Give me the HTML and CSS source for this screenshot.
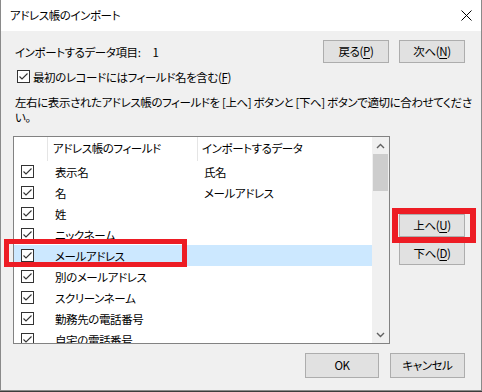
FILE: index.html
```html
<!DOCTYPE html>
<html lang="ja">
<head>
    <meta charset="UTF-8">
    <title>アドレス帳のインポート</title>
    <link rel="stylesheet" href="styles.css">
</head>
<body>
    <div class="window">
        <div class="titlebar">
            <span class="title">アドレス帳のインポート</span>
            <svg class="close" width="11" height="11" viewBox="0 0 11 11">
                <path d="M0.5 0.5 L10.5 10.5 M10.5 0.5 L0.5 10.5" stroke="#000" stroke-width="1" fill="none"/>
            </svg>
        </div>

        <div class="content">
            <div class="top-row">
                <span class="count">インポートするデータ項目:<span class="count-value">1</span></span>
                <div class="nav-buttons">
                    <button class="btn">戻る(<u>P</u>)</button>
                    <button class="btn">次へ(<u>N</u>)</button>
                </div>
            </div>

            <label class="check-row">
                <span class="checkbox checked"></span>
                <span>最初のレコードにはフィールド名を含む(<u>F</u>)</span>
            </label>

            <p class="hint">左右に表示されたアドレス帳のフィールドを [上へ] ボタンと [下へ] ボタンで適切に合わせてくださ<br>い。</p>

            <div class="middle">
                <div class="listbox">
                    <div class="list-main">
                        <div class="list-header">
                            <span class="col-check"></span>
                            <span class="col-field">アドレス帳のフィールド</span>
                            <span class="col-data">インポートするデータ</span>
                        </div>
                        <div id="rows"></div>
                    </div>
                    <div class="scrollbar">
                        <div class="arrow">
                            <svg width="9" height="6" viewBox="0 0 9 6"><path d="M1 5 L4.5 1.5 L8 5" stroke="#606060" stroke-width="1.4" fill="none"/></svg>
                        </div>
                        <div class="thumb"></div>
                        <div class="track"></div>
                        <div class="arrow">
                            <svg width="9" height="6" viewBox="0 0 9 6"><path d="M1 1 L4.5 4.5 L8 1" stroke="#606060" stroke-width="1.4" fill="none"/></svg>
                        </div>
                    </div>
                </div>

                <div class="side-buttons">
                    <button class="btn">上へ(<u>U</u>)</button>
                    <button class="btn">下へ(<u>D</u>)</button>
                </div>
            </div>

            <div class="bottom-row">
                <button class="btn btn-ok">OK</button>
                <button class="btn btn-cancel">キャンセル</button>
            </div>
        </div>

        <!-- annotation boxes -->
        <div class="mark mark-row"></div>
        <div class="mark mark-up"></div>
    </div>

    <script>
        const fields = [
            { name: '表示名', data: '氏名' },
            { name: '名', data: 'メールアドレス' },
            { name: '姓', data: '' },
            { name: 'ニックネーム', data: '' },
            { name: 'メールアドレス', data: '', selected: true },
            { name: '別のメールアドレス', data: '' },
            { name: 'スクリーンネーム', data: '' },
            { name: '勤務先の電話番号', data: '' },
            { name: '自宅の電話番号', data: '' }
        ];

        const rows = document.getElementById('rows');
        fields.forEach(field => {
            const row = document.createElement('div');
            row.className = 'list-row' + (field.selected ? ' selected' : '');
            row.innerHTML = `
                <span class="col-check"><span class="checkbox checked"></span></span>
                <span class="col-field">${field.name}</span>
                <span class="col-data">${field.data}</span>
            `;
            rows.appendChild(row);
        });
    </script>
</body>
</html>
```

FILE: styles.css
```css
* {
    box-sizing: border-box;
    margin: 0;
    padding: 0;
}

html, body {
    background-color: #3c3c3c;
}

body {
    font-family: "Noto Sans CJK JP", "Noto Sans", sans-serif;
    font-size: 11.5px;
    letter-spacing: -0.4px;
    font-feature-settings: "palt";
    color: #000;
}

.window {
    position: relative;
    width: 482px;
    height: 391px;
    background-color: #f0f0f0;
    border: 1px solid #8a8a8a;
    border-top: none;
    overflow: hidden;
}

.titlebar {
    height: 31px;
    background-color: #fff;
    display: flex;
    align-items: center;
    justify-content: space-between;
    padding: 0 9px 1px 9px;
}

.close {
    display: block;
}

.content {
    padding: 9px 16px 0 12px;
}

.top-row {
    display: flex;
    justify-content: space-between;
    align-items: center;
}

.count {
    margin-left: 2px;
}

.count-value {
    margin-left: 12px;
}

.nav-buttons {
    display: flex;
    gap: 10px;
}

.btn {
    font-family: inherit;
    font-size: inherit;
    letter-spacing: inherit;
    font-feature-settings: "palt";
    color: #000;
    background-color: #e1e1e1;
    border: 1px solid #adadad;
    width: 66px;
    height: 23px;
    line-height: 19px;
    text-align: center;
}

.btn u {
    text-decoration-thickness: 1px;
    text-underline-offset: 2px;
}

.check-row {
    display: flex;
    align-items: center;
    gap: 3px;
    margin-top: 7px;
    margin-left: 4px;
    height: 13px;
}

.checkbox {
    display: inline-block;
    width: 13px;
    height: 13px;
    border: 1px solid #333;
    background-color: #fff;
    flex-shrink: 0;
}

.checkbox.checked {
    background-image: url("data:image/svg+xml,%3Csvg xmlns='http://www.w3.org/2000/svg' width='11' height='11' viewBox='0 0 11 11'%3E%3Cpath d='M1.5 5.5 L4 8 L9.5 2.5' stroke='%23333' stroke-width='1.1' fill='none'/%3E%3C/svg%3E");
    background-repeat: no-repeat;
}

.hint {
    margin-top: 12px;
    margin-left: 2px;
    line-height: 15px;
    white-space: nowrap;
}

.middle {
    display: flex;
    gap: 9px;
    margin-top: 11px;
}

.listbox {
    width: 378px;
    height: 208px;
    border: 1px solid #828282;
    background-color: #fff;
    display: flex;
    overflow: hidden;
}

.list-main {
    flex: 1;
    overflow: hidden;
}

.list-header, .list-row {
    display: flex;
    align-items: center;
}

.list-header {
    height: 24px;
}

.list-row {
    height: 21px;
}

.list-row.selected {
    background-color: #cce8ff;
}

.col-check {
    width: 33px;
    padding-left: 7px;
    display: flex;
    align-items: center;
}

.col-field {
    width: 150px;
    padding-left: 8px;
    white-space: nowrap;
}

.col-data {
    flex: 1;
    padding-left: 7px;
    white-space: nowrap;
}

.list-header .col-field,
.list-header .col-data {
    height: 100%;
    line-height: 23px;
    border-left: 1px solid #e5e5e5;
    padding-left: 5px;
}

.list-header .col-data {
    padding-left: 4px;
}

.list-header .col-check {
    height: 100%;
}

.scrollbar {
    width: 17px;
    background-color: #f0f0f0;
    display: flex;
    flex-direction: column;
}

.arrow {
    height: 17px;
    display: flex;
    align-items: center;
    justify-content: center;
}

.thumb {
    height: 37px;
    margin: 0 1px;
    background-color: #cdcdcd;
}

.track {
    flex: 1;
}

.side-buttons {
    display: flex;
    flex-direction: column;
    gap: 5px;
    padding-top: 78px;
}

.side-buttons .btn {
    width: 66px;
    height: 23px;
}

.bottom-row {
    display: flex;
    justify-content: flex-end;
    gap: 11px;
    margin-top: 9px;
}

.btn-ok {
    width: 74px;
    height: 25px;
}

.btn-cancel {
    width: 75px;
    height: 25px;
}

.mark {
    position: absolute;
    border: 5px solid #ed1c24;
}

.mark-row {
    left: 3px;
    top: 239px;
    width: 183px;
    height: 28px;
}

.mark-up {
    left: 391px;
    top: 208px;
    width: 84px;
    height: 35px;
    border-width: 6px;
}
```
